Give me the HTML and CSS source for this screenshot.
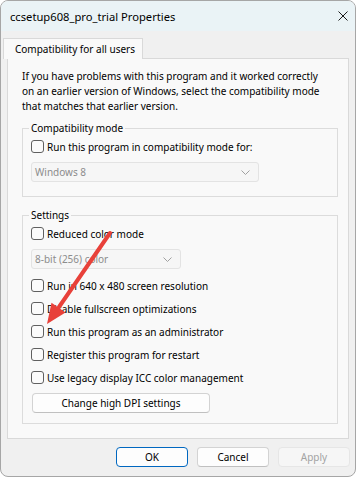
FILE: index.html
```html
<!DOCTYPE html>
<html lang="en">

<head>
    <meta charset="UTF-8">
    <title>ccsetup608_pro_trial Properties</title>
    <link rel="stylesheet" href="styles.css">
</head>

<body>
    <div class="window">
        <!-- Title bar -->
        <div class="titlebar">
            <span class="title">ccsetup608_pro_trial Properties</span>
            <svg class="close" width="10" height="10" viewBox="0 0 10 10">
                <path d="M0.5 0.5L9.5 9.5M9.5 0.5L0.5 9.5" stroke="#1b1b1b" stroke-width="1" fill="none"/>
            </svg>
        </div>

        <div class="client">
            <div class="tabs">
                <div class="tab">Compatibility for all users</div>
            </div>

            <div class="panel">
                <p class="intro">If you have problems with this program and it worked correctly<br>on an earlier version of Windows, select the compatibility mode<br>that matches that earlier version.</p>

                <!-- Compatibility mode -->
                <fieldset class="group compat">
                    <legend>Compatibility mode</legend>
                    <label class="check"><span class="box"></span>Run this program in compatibility mode for:</label>
                    <div class="select os">
                        <span>Windows 8</span>
                        <svg width="9" height="5" viewBox="0 0 9 5"><path d="M0.5 0.5L4.5 4.5L8.5 0.5" stroke="#a0a0a0" fill="none"/></svg>
                    </div>
                </fieldset>

                <!-- Settings -->
                <fieldset class="group settings">
                    <legend>Settings</legend>
                    <label class="check"><span class="box"></span>Reduced color mode</label>
                    <div class="select colors">
                        <span>8-bit (256) color</span>
                        <svg width="9" height="5" viewBox="0 0 9 5"><path d="M0.5 0.5L4.5 4.5L8.5 0.5" stroke="#a0a0a0" fill="none"/></svg>
                    </div>
                    <label class="check after-select"><span class="box"></span>Run in 640 x 480 screen resolution</label>
                    <label class="check"><span class="box"></span>Disable fullscreen optimizations</label>
                    <label class="check"><span class="box"></span>Run this program as an administrator</label>
                    <label class="check"><span class="box"></span>Register this program for restart</label>
                    <label class="check"><span class="box"></span>Use legacy display ICC color management</label>
                    <button class="btn dpi">Change high DPI settings</button>
                </fieldset>
            </div>

            <div class="actions">
                <button class="btn ok">OK</button>
                <button class="btn">Cancel</button>
                <button class="btn apply">Apply</button>
            </div>
        </div>

        <!-- Red annotation arrow -->
        <svg class="arrow" width="354" height="475" viewBox="0 0 354 475">
            <line x1="109" y1="232" x2="58" y2="306" stroke="#e8413a" stroke-width="4" stroke-linecap="round"/>
            <polygon points="46,323 64.5,311.5 50.5,301.8" fill="#e8413a"/>
        </svg>
    </div>
</body>

</html>
```

FILE: styles.css
```css
body {
    margin: 0;
    background: #ffffff;
    font-family: "Noto Sans", sans-serif;
    font-size: 10px;
    color: #000;
}

.window {
    position: relative;
    width: 356px;
    height: 477px;
    box-sizing: border-box;
    border: 1px solid #a6a6a6;
    border-radius: 8px;
    overflow: hidden;
    background: #f0f0f0;
}

.titlebar {
    height: 30px;
    display: flex;
    align-items: center;
    padding-left: 9px;
    background: #eaf3f6;
}

.title {
    flex: 1;
    font-size: 11.2px;
}

.close {
    margin-right: 7px;
}

.client {
    padding-top: 7px;
}

.tabs {
    display: flex;
    padding-left: 2px;
}

.tab {
    position: relative;
    z-index: 1;
    width: 140px;
    height: 21px;
    box-sizing: border-box;
    line-height: 20px;
    padding-left: 11px;
    margin-bottom: -1px;
    background: #f9f9f9;
    border: 1px solid #d9d9d9;
    border-bottom: none;
}

.panel {
    margin: 0 6px;
    padding: 10px 10px 14px 14px;
    background: #f9f9f9;
    border: 1px solid #d9d9d9;
}

.intro {
    margin: 0;
    line-height: 15px;
}

.group {
    margin: 7px 0 0;
    padding: 0 8px 14px;
    min-width: 0;
    border: 1px solid #dcdcdc;
}

.group legend {
    padding: 0 2px;
    margin-left: -2px;
    line-height: 14px;
}

.settings {
    margin-top: 11px;
    padding-bottom: 10px;
}

.check {
    display: flex;
    align-items: center;
    height: 23px;
}

.box {
    width: 13px;
    height: 13px;
    box-sizing: border-box;
    margin-right: 3px;
    border: 1px solid #606060;
    border-radius: 3px;
    background: #fbfbfb;
}

.select {
    display: flex;
    align-items: center;
    justify-content: space-between;
    height: 20px;
    box-sizing: border-box;
    margin-top: 4px;
    padding: 0 8px 0 3px;
    border: 1px solid #e3e3e3;
    border-radius: 3px;
    background: #f6f6f6;
    color: #8c8c8c;
}

.os {
    width: 228px;
}

.colors {
    width: 150px;
}

.after-select {
    margin-top: 5px;
}

.btn {
    height: 20px;
    box-sizing: border-box;
    padding: 0;
    font: inherit;
    color: #000;
    background: #fdfdfd;
    border: 1px solid #d3d3d3;
    border-bottom-color: #c0c0c0;
    border-radius: 4px;
}

.dpi {
    display: block;
    width: 178px;
    margin: 4px 0 0 1px;
}

.actions {
    display: flex;
    justify-content: flex-end;
    gap: 9px;
    margin: 8px 5px 0 0;
}

.actions .btn {
    width: 72px;
}

.ok {
    border-color: #0067c0;
}

.apply {
    color: #a3a3a3;
    background: #f6f6f6;
    border-color: #e6e6e6;
}

.arrow {
    position: absolute;
    top: 0;
    left: 0;
    pointer-events: none;
}
```
